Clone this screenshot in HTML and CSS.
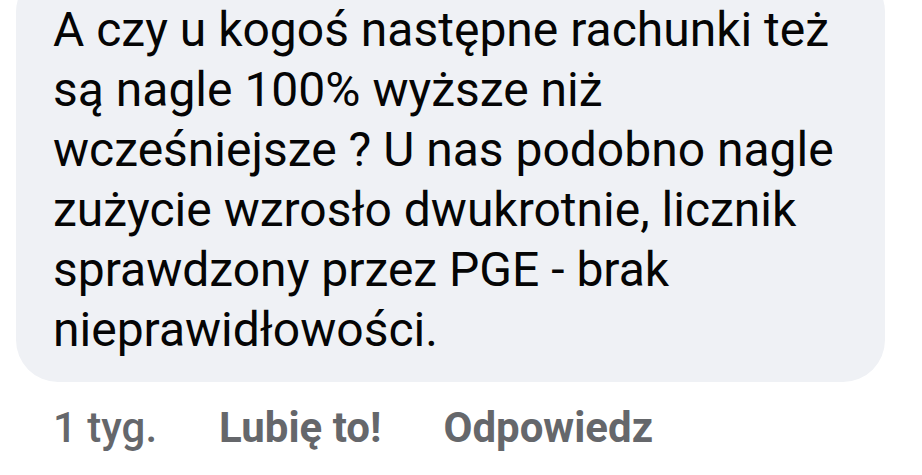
FILE: index.html
```html
<!DOCTYPE html>
<html lang="pl">
<head>
<meta charset="utf-8">
<link rel="stylesheet" href="styles.css">
</head>
<body>
<div class="comment">
  <div class="bubble">
    <p class="text">A czy u kogoś następne rachunki też<br>są nagle 100% wyższe niż<br>wcześniejsze ? U nas podobno nagle<br>zużycie wzrosło dwukrotnie, licznik<br>sprawdzony przez PGE - brak<br>nieprawidłowości.</p>
  </div>
  <div class="actions">
    <span class="time">1 tyg.</span>
    <span class="action">Lubię to!</span>
    <span class="action">Odpowiedz</span>
  </div>
</div>
</body>
</html>
```

FILE: styles.css
```css
html, body {
  margin: 0;
  padding: 0;
  background: #ffffff;
}

body {
  font-family: Roboto, "Liberation Sans", sans-serif;
  width: 922px;
  height: 475px;
  overflow: hidden;
}

.comment {
  padding: 0 37px 0 16px;
}

.bubble {
  background: #eff1f5;
  border-radius: 42px;
  margin-top: -30px;
  padding: 30px 30px 22px 37px;
}

.text {
  margin: 0;
  font-size: 48px;
  line-height: 60px;
  color: #050505;
  white-space: nowrap;
}

.actions {
  display: flex;
  gap: 62px;
  margin-top: 21px;
  padding-left: 37px;
  font-size: 42px;
  line-height: 50px;
  font-weight: 700;
  color: #65676b;
}

.time {
  font-weight: 500;
}
```
